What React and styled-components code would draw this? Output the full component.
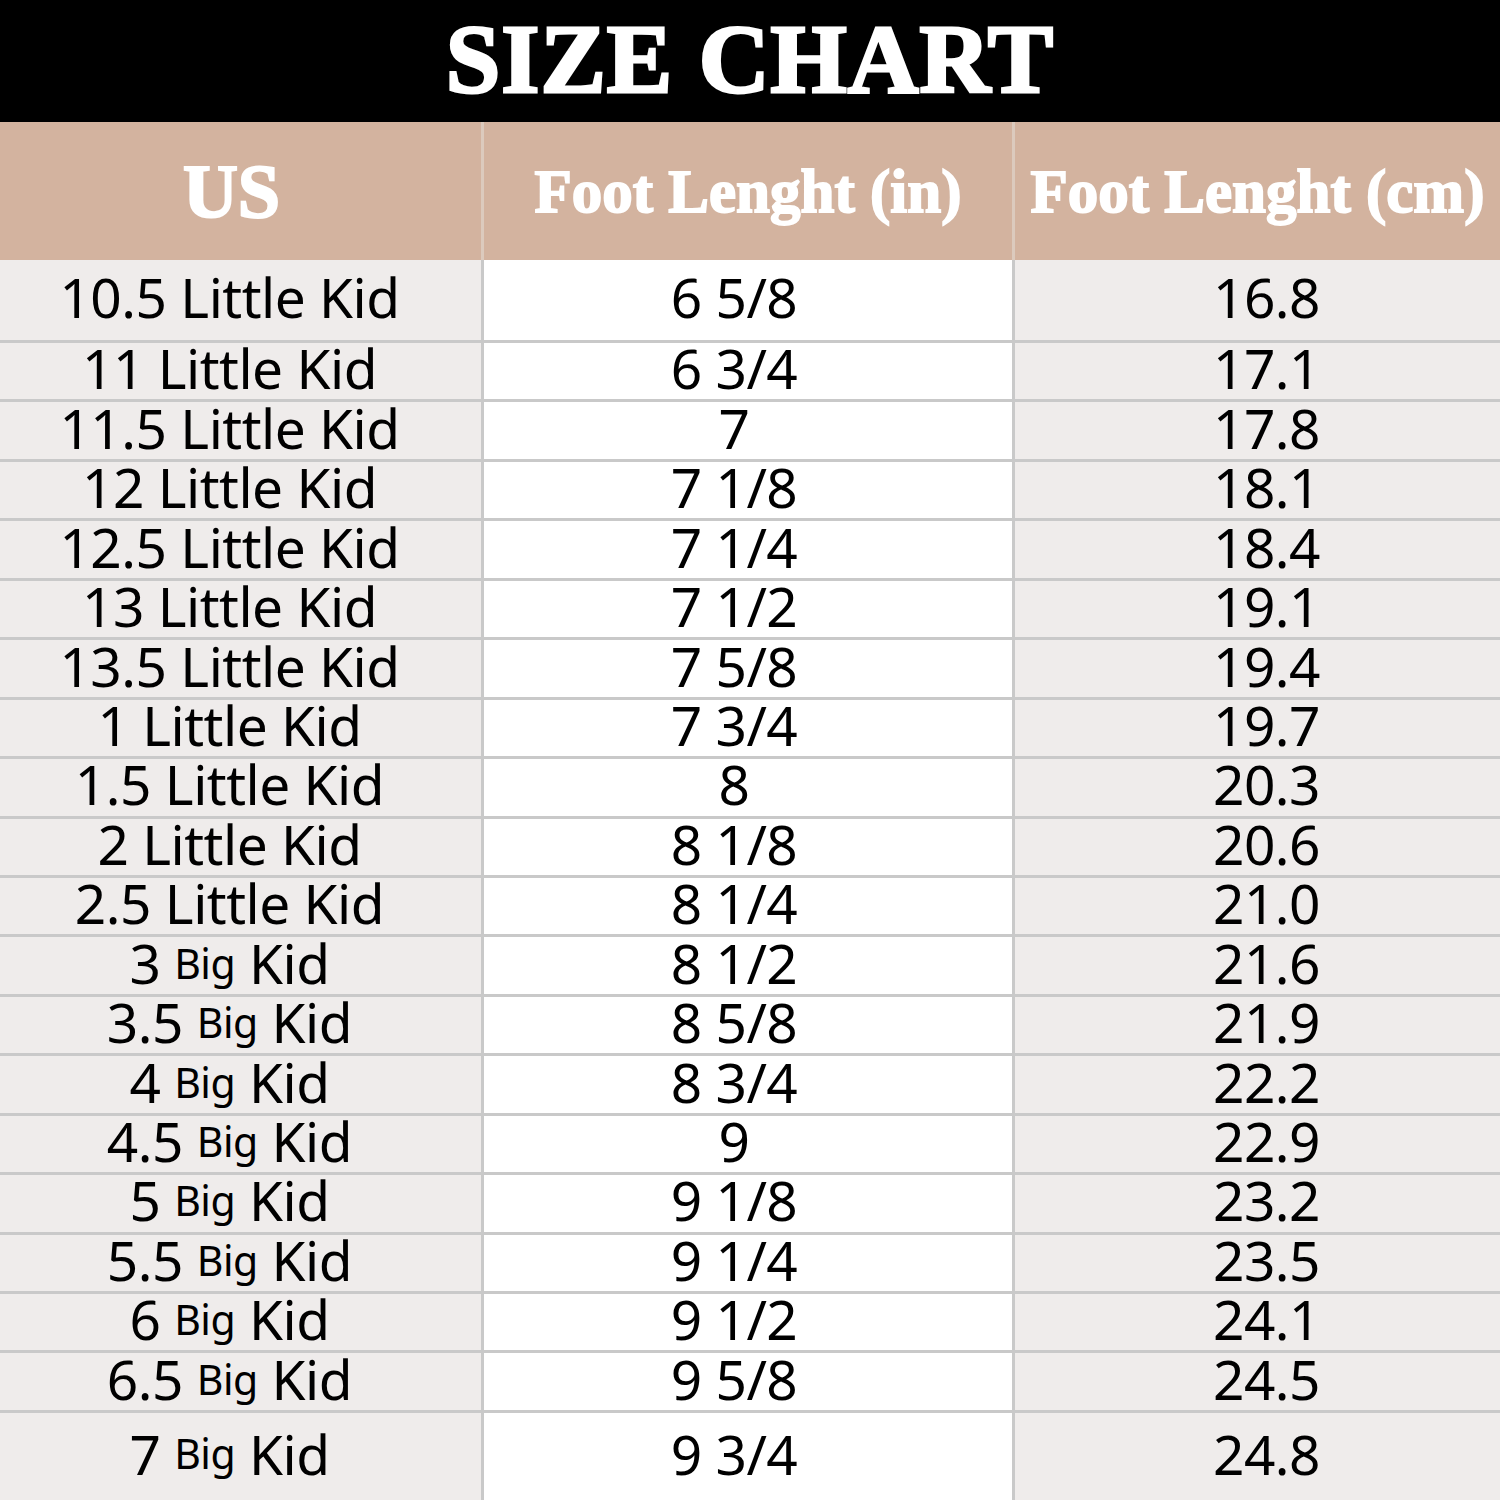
import React from "react";
import styled, { createGlobalStyle } from "styled-components";

const Global = createGlobalStyle`
  html, body { margin: 0; padding: 0; background: #ffffff; }
  #root { width: 1500px; height: 1500px; overflow: hidden; }
`;

const Page = styled.div`
  width: 1500px;
  height: 1500px;
  display: flex;
  flex-direction: column;
  background: #efeceb;
`;

const TitleBar = styled.div`
  height: 122px;
  background: #000;
  display: flex;
  align-items: center;
  justify-content: center;
  flex-shrink: 0;
`;

const Title = styled.h1`
  margin: 0;
  font-family: "Liberation Serif", "Times New Roman", serif;
  font-weight: 700;
  font-size: 98px;
  line-height: 1;
  color: #fff;
  -webkit-text-stroke: 3px #fff;
  letter-spacing: 1px;
  transform: translateY(-2px);
`;

const HeadRow = styled.div`
  height: 138px;
  display: grid;
  grid-template-columns: 484px 531px 485px;
  background: #d3b39f;
  flex-shrink: 0;
`;

const HeadCell = styled.div`
  display: flex;
  align-items: center;
  justify-content: center;
  border-right: ${(p) => (p.$last ? "none" : "3px solid #dccabd")};
  padding-left: ${(p) => p.$pl || 0}px;
  padding-right: ${(p) => p.$pr || 0}px;
  font-family: "Liberation Serif", "Times New Roman", serif;
  font-weight: 700;
  font-size: ${(p) => p.$size}px;
  color: #fff;
  -webkit-text-stroke: ${(p) => p.$stroke}px #fff;
  white-space: nowrap;
  line-height: 1;
`;

const Body = styled.div`
  flex: 1;
  display: flex;
  flex-direction: column;
`;

const Row = styled.div`
  height: ${(p) => p.$h}px;
  display: grid;
  grid-template-columns: 484px 531px 485px;
  border-top: ${(p) => (p.$first ? "none" : "3px solid #c9c9c9")};
  box-sizing: border-box;
  flex-shrink: 0;
`;

const Cell = styled.div`
  display: flex;
  align-items: center;
  justify-content: center;
  background: ${(p) => (p.$white ? "#ffffff" : "#efeceb")};
  border-right: ${(p) => (p.$last ? "none" : "3px solid #c9c9c9")};
  padding-left: ${(p) => p.$pl || 0}px;
  padding-right: ${(p) => p.$pr || 0}px;
  padding-bottom: 5px;
  box-sizing: border-box;
  font-family: "Noto Sans", "Open Sans", sans-serif;
  font-size: 55px;
  line-height: 0.85;
  color: #000;
  white-space: pre;
  letter-spacing: -0.5px;
`;

const Small = styled.span`
  font-size: 41px;
`;

const rows = [
  ["10.5", "Little", "6 5/8", "16.8"],
  ["11", "Little", "6 3/4", "17.1"],
  ["11.5", "Little", "7", "17.8"],
  ["12", "Little", "7 1/8", "18.1"],
  ["12.5", "Little", "7 1/4", "18.4"],
  ["13", "Little", "7 1/2", "19.1"],
  ["13.5", "Little", "7 5/8", "19.4"],
  ["1", "Little", "7 3/4", "19.7"],
  ["1.5", "Little", "8", "20.3"],
  ["2", "Little", "8 1/8", "20.6"],
  ["2.5", "Little", "8 1/4", "21.0"],
  ["3", "Big", "8 1/2", "21.6"],
  ["3.5", "Big", "8 5/8", "21.9"],
  ["4", "Big", "8 3/4", "22.2"],
  ["4.5", "Big", "9", "22.9"],
  ["5", "Big", "9 1/8", "23.2"],
  ["5.5", "Big", "9 1/4", "23.5"],
  ["6", "Big", "9 1/2", "24.1"],
  ["6.5", "Big", "9 5/8", "24.5"],
  ["7", "Big", "9 3/4", "24.8"],
];

function heightFor(i) {
  if (i === 0) return 80;
  if (i === rows.length - 1) return 90;
  return 59.45;
}

export default function App() {
  return (
    <>
      <Global />
      <Page>
        <TitleBar>
          <Title>SIZE CHART</Title>
        </TitleBar>
        <HeadRow>
          <HeadCell $size={76} $stroke={2.2} $pr={18}>US</HeadCell>
          <HeadCell $size={61} $stroke={1.8}>Foot Lenght (in)</HeadCell>
          <HeadCell $size={61} $stroke={1.8} $last>Foot Lenght (cm)</HeadCell>
        </HeadRow>
        <Body>
          {rows.map(([us, kind, inch, cm], i) => (
            <Row key={i} $h={heightFor(i)} $first={i === 0}>
              <Cell $pr={22}>
                {kind === "Big" ? (
                  <>
                    {us + " "}
                    <Small>Big</Small>
                    {" Kid"}
                  </>
                ) : (
                  `${us} Little Kid`
                )}
              </Cell>
              <Cell $white $pr={28}>{inch}</Cell>
              <Cell $last $pl={18}>{cm}</Cell>
            </Row>
          ))}
        </Body>
      </Page>
    </>
  );
}
